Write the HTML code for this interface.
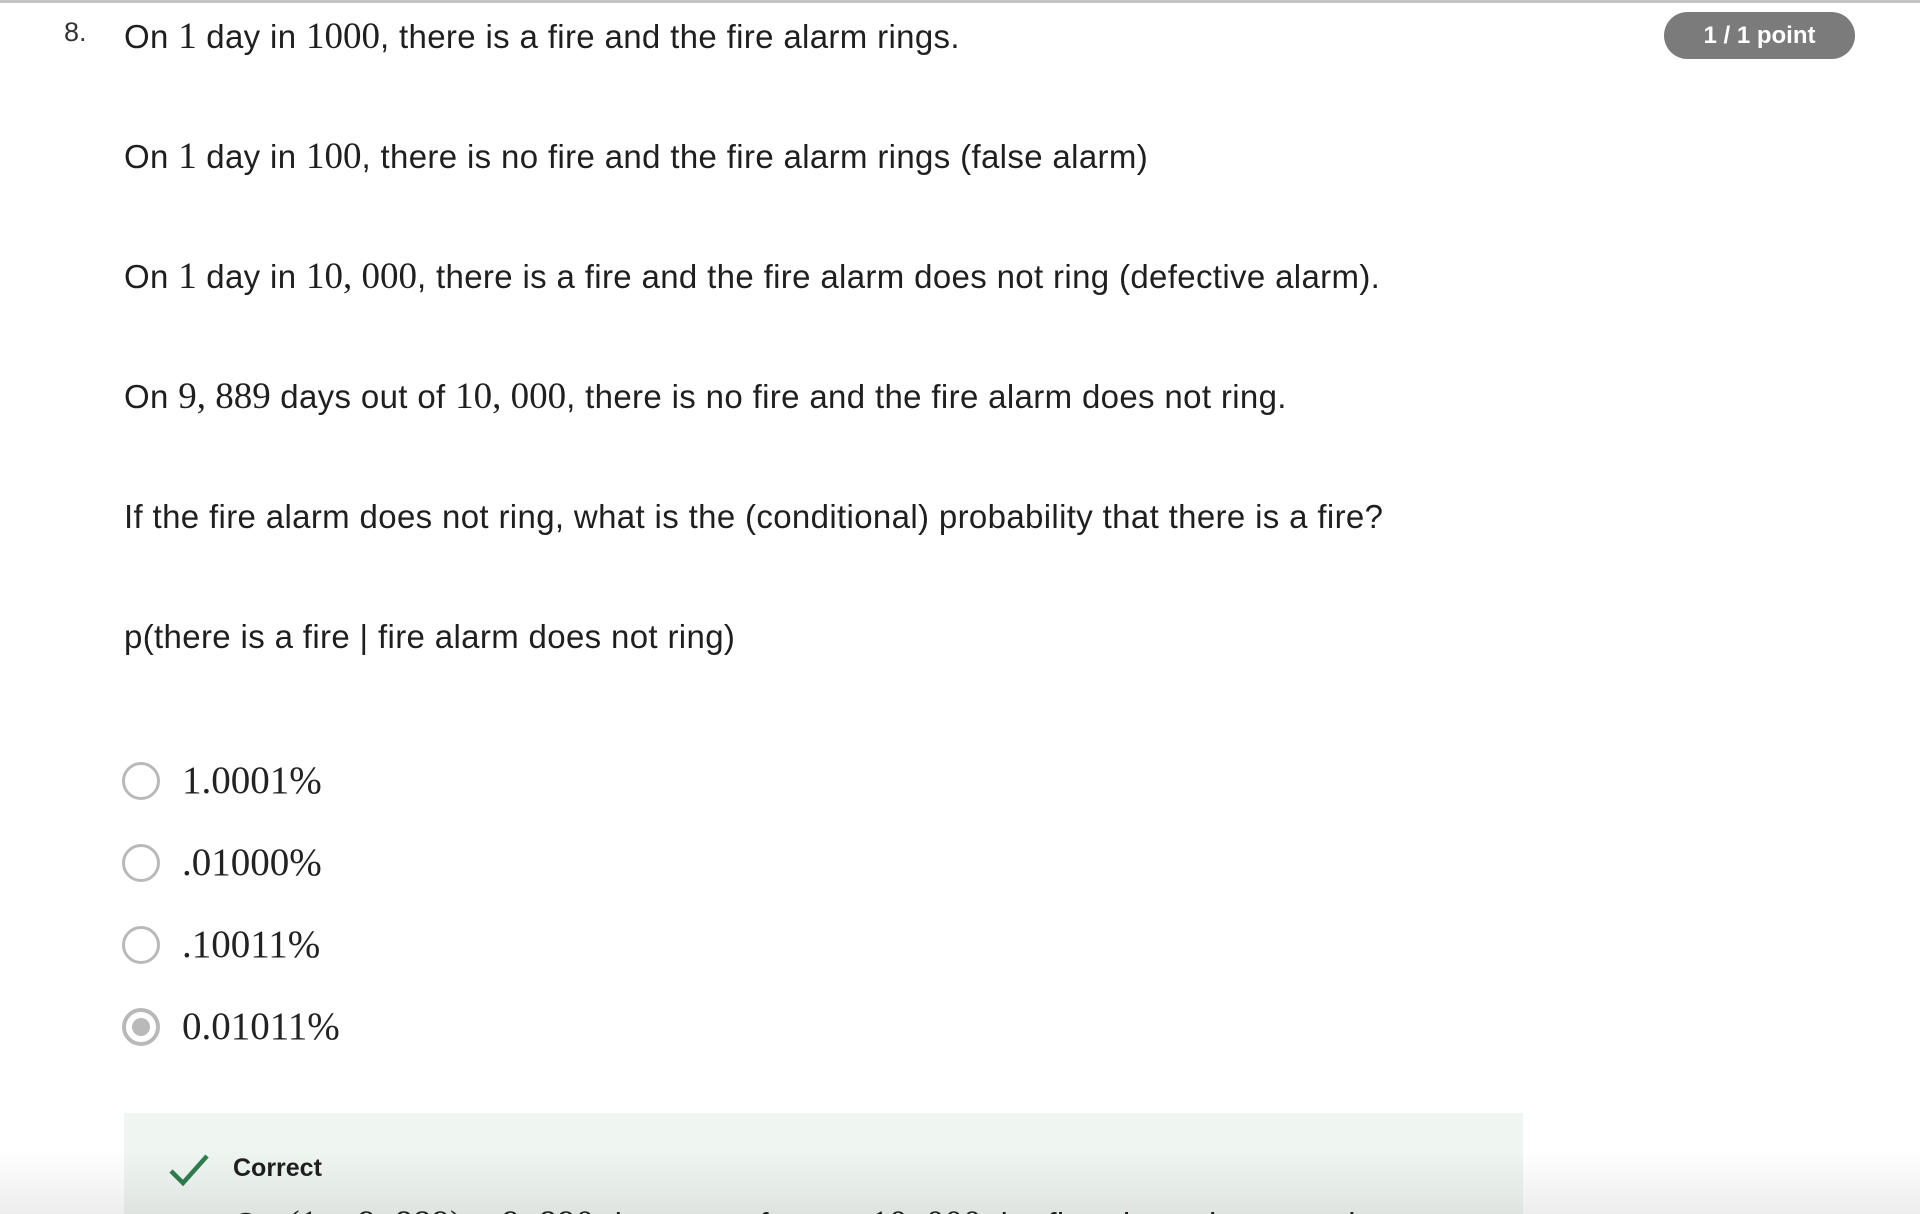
<!DOCTYPE html>
<html style="height:1214px;overflow:hidden"><head><meta charset="utf-8"><style>
body{margin:0;width:1920px;height:1214px;overflow:hidden;background:#fff;position:relative;font-family:"Liberation Sans",sans-serif;color:#1f1f1f}
.top{position:absolute;left:0;top:0;width:1920px;height:3px;background:#c4c4c4}
.l{position:absolute;left:124px;font-size:33px;line-height:40px;white-space:nowrap;letter-spacing:0.35px}
.m{font-family:"Liberation Serif",serif;font-size:37px;letter-spacing:0}
.num{position:absolute;left:64px;top:17px;font-size:27px;color:#333}
.badge{position:absolute;left:1664px;top:12px;width:191px;height:47px;border-radius:24px;background:#7b7b7b;color:#fff;font-weight:bold;font-size:24px;line-height:47px;text-align:center}
.r{position:absolute;left:122px;width:38px;height:38px;border:3px solid #b9b9b9;border-radius:50%;box-sizing:border-box}
.r.s{border-width:4px}
.r.s::after{content:"";position:absolute;left:6px;top:6px;width:18px;height:18px;border-radius:50%;background:#b9b9b9}
.o{position:absolute;left:182px;font-family:"Liberation Serif",serif;font-size:39px;line-height:44px;color:#222}
.box{position:absolute;left:124px;top:1113px;width:1399px;height:101px;background:#eff5f1;overflow:hidden}
.shade{position:absolute;left:0;top:1150px;width:1920px;height:64px;background:linear-gradient(rgba(0,0,0,0),rgba(0,0,0,0.07))}
</style></head><body>
<div class="top"></div>
<div class="num">8.</div>
<div class="badge">1 / 1 point</div>
<div class="l" style="top:17px">On <span class="m">1</span> day in <span class="m">1000</span>, there is a fire and the fire alarm rings.</div>
<div class="l" style="top:137px">On <span class="m">1</span> day in <span class="m">100</span>, there is no fire and the fire alarm rings (false alarm)</div>
<div class="l" style="top:257px">On <span class="m">1</span> day in <span class="m">10, 000</span>, there is a fire and the fire alarm does not ring (defective alarm).</div>
<div class="l" style="top:377px">On <span class="m">9, 889</span> days out of <span class="m">10, 000</span>, there is no fire and the fire alarm does not ring.</div>
<div class="l" style="top:497px">If the fire alarm does not ring, what is the (conditional) probability that there is a fire?</div>
<div class="l" style="top:617px">p(there is a fire | fire alarm does not ring)</div>
<div class="r" style="top:762px"></div><div class="o" style="top:759px">1.0001%</div>
<div class="r" style="top:844px"></div><div class="o" style="top:841px">.01000%</div>
<div class="r" style="top:926px"></div><div class="o" style="top:923px">.10011%</div>
<div class="r s" style="top:1008px"></div><div class="o" style="top:1005px">0.01011%</div>
<div class="box">
<svg style="position:absolute;left:44px;top:40px" width="42" height="34" viewBox="0 0 42 34"><path d="M3 18 L15 30 L39 3" fill="none" stroke="#2f7d4f" stroke-width="4.5"/></svg>
<div style="position:absolute;left:109px;top:41px;font-weight:bold;font-size:25px;color:#1f1f1f">Correct</div>
<div style="position:absolute;left:109px;top:92px;font-size:33px;line-height:40px;white-space:nowrap;letter-spacing:0.35px">On <span class="m">(1 + 9, 889) = 9, 890</span> days out of every <span class="m">10, 000</span> the fire alarm does not ring</div>
</div>
<div class="shade"></div>
</body></html>
